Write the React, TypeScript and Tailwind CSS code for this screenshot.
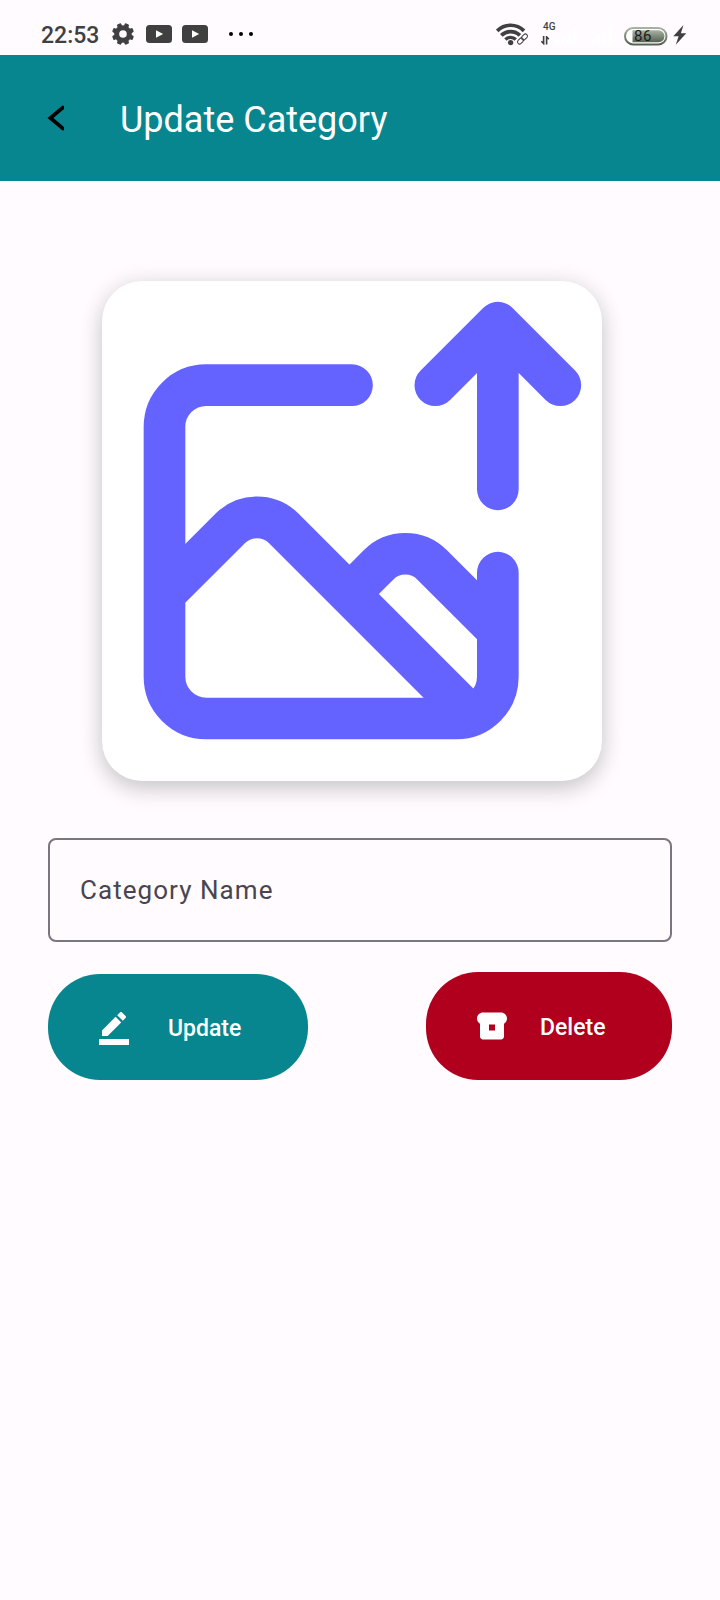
import React from "react";

const GEAR_TEETH = [22.5, 67.5, 112.5, 157.5, 202.5, 247.5, 292.5, 337.5];

function SignalBars({ className }: { className: string }) {
  return (
    <svg className={className} viewBox="0 0 22 17" fill="#fff">
      <rect x="0" y="12" width="4" height="5" />
      <rect x="6" y="8" width="4" height="9" />
      <rect x="12" y="4" width="4" height="13" />
      <rect x="18" y="0" width="4" height="17" />
    </svg>
  );
}

function StatusBar() {
  return (
    <div className="flex h-[55px] shrink-0 items-start text-[#404040]">
      <span className="ml-[41px] mt-[22px] w-[58px] whitespace-nowrap text-[23px] font-medium leading-[28px]">22:53</span>
      <svg className="ml-[13px] mt-[23px] h-[22px] w-[22px]" viewBox="0 0 22 22" fill="#404040">
        <circle cx="11" cy="11" r="6.300" fill="none" stroke="#404040" strokeWidth="5" />
        {GEAR_TEETH.map((angle) => (
          <rect key={angle} x="8.700" y="0" width="4.600" height="4.500" rx="1.300" transform={`rotate(${angle} 11 11)`} />
        ))}
      </svg>
      {[0, 1].map((i) => (
        <svg key={i} className={i ? "ml-[10px] mt-[25px] h-[18px] w-[26px]" : "ml-[12px] mt-[25px] h-[18px] w-[26px]"} viewBox="0 0 26 18">
          <rect width="26" height="18" rx="3.500" fill="#404040" />
          <path d="M10 5.200v7.600l7.200-3.800z" fill="#fff" />
        </svg>
      ))}
      <svg className="ml-[20px] mt-[31px] h-[6px] w-[26px]" viewBox="0 0 26 6" fill="#000">
        <circle cx="3" cy="3" r="2" />
        <circle cx="13" cy="3" r="2" />
        <circle cx="23" cy="3" r="2" />
      </svg>
      <svg className="ml-[242px] mt-[23px] h-[24px] w-[34px]" viewBox="0 0 34 24" fill="none" stroke="#404040">
        <path d="M1.200 7.900a18.700 18.700 0 0 1 26.800 0" strokeWidth="3.700" />
        <path d="M5.300 12.400a13.200 13.200 0 0 1 18.600 0" strokeWidth="3.700" />
        <path d="M9.400 16.500a7.400 7.400 0 0 1 10.400 0" strokeWidth="3.300" />
        <circle cx="14.600" cy="19.600" r="2.700" fill="#404040" stroke="none" />
        <g transform="rotate(-45 26.500 16)" strokeWidth="1">
          <rect x="20.300" y="13.900" width="12.400" height="4.200" rx="2.100" stroke="#fffbff" strokeWidth="3" fill="#fffbff" />
          <rect x="20.300" y="13.900" width="6.800" height="4.200" rx="2.100" />
          <rect x="25.900" y="13.900" width="6.800" height="4.200" rx="2.100" />
        </g>
      </svg>
      <div className="ml-[11px] mt-[21px] flex w-[14px] flex-col">
        <span className="pl-[2px] text-[10px] font-medium leading-[12px]">4G</span>
        <svg className="mt-[3px] h-[9px] w-[9px]" viewBox="0 0 9 9" fill="none" stroke="#404040" strokeWidth="1.600">
          <path d="M2.600 0v7.500L.4 5.200M5.600 8.600V.8L7.800 3.200" />
        </svg>
      </div>
      <SignalBars className="mt-[27px] h-[17px] w-[22px]" />
      <SignalBars className="ml-[13px] mt-[27px] h-[17px] w-[22px]" />
      <svg className="ml-[12px] mt-[27px] h-[19px] w-[45px]" viewBox="0 0 45 19">
        <defs>
          <linearGradient id="cell" x1="0" y1="0" x2="0" y2="1">
            <stop offset="0" stopColor="#a9b3a3" />
            <stop offset="1" stopColor="#566152" />
          </linearGradient>
        </defs>
        <rect x="1" y="1" width="41.500" height="16.400" rx="8.200" fill="#fff" stroke="url(#cell)" strokeWidth="2" />
        <path d="M8.500 3.200H34.500a6 6 0 0 1 0 12H8.500z" fill="url(#cell)" />
        <text x="10" y="13.500" fontSize="15" fontFamily="Roboto, sans-serif" letterSpacing="0.600" fill="#1c1c1c">86</text>
      </svg>
      <svg className="ml-[4px] mt-[25px] h-[20px] w-[14px]" viewBox="0 0 14 20" fill="#404040">
        <path d="M10.500 0L.3 11.300h5.300L2.800 19.800 13.300 8.200H7.900z" />
      </svg>
    </div>
  );
}

function UploadImageIcon() {
  return (
    <svg className="size-[500px]" viewBox="0 0 24 24" fill="none" stroke="#6463ff" strokeWidth="2">
      <path d="M12 5H5a2 2 0 0 0-2 2v12a2 2 0 0 0 2 2h12a2 2 0 0 0 2-2v-5" strokeLinecap="round" />
      <path d="M3 15.030L6.150 11.880a1.820 1.820 0 0 1 2.580 0L17.500 20.650" />
      <path d="M11.870 15.030L13.270 13.630a1.820 1.820 0 0 1 2.580 0L19 16.780" />
      <path d="M19 10V2M16 5l3-3 3 3" strokeLinecap="round" strokeLinejoin="round" />
    </svg>
  );
}

export default function App() {
  return (
    <div className="flex h-[1600px] w-[720px] flex-col overflow-hidden bg-[#fffbff] font-['Roboto',sans-serif]">
      <StatusBar />
      <header className="flex h-[126px] shrink-0 items-start bg-[#08868f]">
        <button className="ml-[47px] mt-[50px]" aria-label="Back">
          <svg className="h-[26px] w-[17px]" viewBox="0 0 17 26" fill="none" stroke="#000" strokeWidth="3.800" strokeLinecap="round">
            <path d="M15.800 2.600L3.400 13l12.400 10.400" />
          </svg>
        </button>
        <h1 className="ml-[56px] mt-[44px] whitespace-nowrap text-[36px] leading-[42px] text-white">Update Category</h1>
      </header>
      <main className="flex flex-col px-12 pt-[100px]">
        <div className="ml-[54px] size-[500px] rounded-[40px] bg-white shadow-[0_9px_22px_rgba(0,0,0,0.17),0_0_24px_rgba(0,0,0,0.08)]">
          <UploadImageIcon />
        </div>
        <div className="mt-[57px] flex h-[104px] items-center rounded-[8px] border-2 border-[#7a757f] px-[30px]">
          <span className="text-[26px] leading-[30px] tracking-[1.05px] text-[#49454f]">Category Name</span>
        </div>
        <div className="mt-[30px] flex items-end justify-between">
          <button className="flex h-[106px] w-[260px] items-center rounded-[52px] bg-[#08868f] pl-12 text-white">
            <svg className="size-[36px]" viewBox="0 0 24 24" fill="currentColor">
              <path d="M22 24H2v-4h20v4zM13.060 5.190l3.750 3.750L7.750 18H4v-3.750l9.060-9.060zM17.880 7.870l-3.750-3.750 1.830-1.830c.39-.39 1.020-.39 1.410 0l2.340 2.340c.39.39.39 1.020 0 1.410l-1.830 1.830z" />
            </svg>
            <span className="ml-[36px] pt-[4px] text-[23px] font-medium leading-[28px]">Update</span>
          </button>
          <button className="flex h-[108px] w-[246px] items-center rounded-[52px] bg-[#b0001e] pl-12 text-white">
            <svg className="size-[36px]" viewBox="0 0 24 24" fill="currentColor">
              <path fillRule="evenodd" d="M18 3H6C3.790 3 2 4.790 2 7c0 1.480.81 2.750 2 3.450V19c0 1.100.9 2 2 2h12c1.100 0 2-.9 2-2v-8.550c1.190-.69 2-1.970 2-3.450 0-2.210-1.790-4-4-4zm-4 12h-4v-4h4v4z" />
            </svg>
            <span className="ml-[30px] pt-[4px] text-[23px] font-medium leading-[28px]">Delete</span>
          </button>
        </div>
      </main>
    </div>
  );
}
